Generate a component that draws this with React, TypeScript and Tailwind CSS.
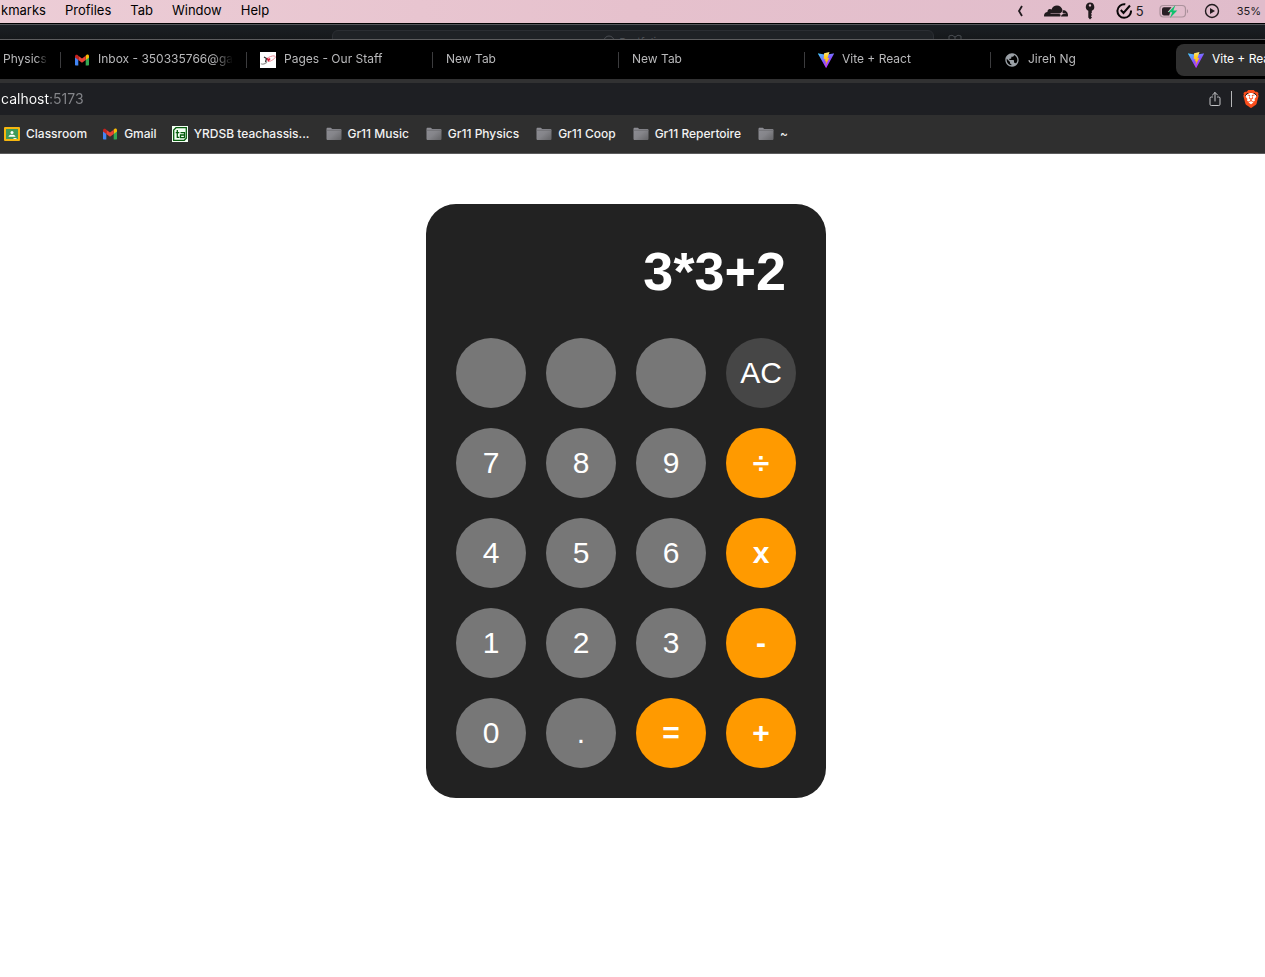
import { useState } from "react";
import type { ReactNode } from "react";
import { MdPublic } from "react-icons/md";
import { SiBrave, SiCloudflare } from "react-icons/si";
import { IoShareOutline } from "react-icons/io5";

function GmailIcon() {
  return (
    <svg viewBox="0 0 16 16" className="size-4 shrink-0" aria-hidden="true">
      <path d="M1 4.5v8c0 .6.4 1 1 1h2.3V7z" fill="#4285f4" />
      <path d="M15 4.5v8c0 .6-.4 1-1 1h-2.3V7z" fill="#34a853" />
      <path d="M11.7 3.8V8L15 5.5V4.2c0-1.4-1.5-2.1-2.6-1.2z" fill="#fbbc04" />
      <path d="M4.3 8V3.8L8 6.6l3.7-2.8V8L8 10.8z" fill="#ea4335" />
      <path d="M1 4.2v1.3L4.3 8V3.8L3.6 3C2.500 2.200 1 2.800 1 4.200z" fill="#c5221f" />
    </svg>
  );
}

function ViteIcon() {
  return (
    <svg viewBox="0 0 16 16" className="size-4 shrink-0" aria-hidden="true">
      <defs>
        <linearGradient id="vite-body" x1="0" y1="0" x2="0.6" y2="1">
          <stop offset="0" stopColor="#41d1ff" />
          <stop offset="0.6" stopColor="#8a4cff" />
          <stop offset="1" stopColor="#bd34fe" />
        </linearGradient>
        <linearGradient id="vite-bolt" x1="0" y1="0" x2="0" y2="1">
          <stop offset="0" stopColor="#ffea83" />
          <stop offset="0.3" stopColor="#ffd028" />
          <stop offset="1" stopColor="#ffa800" />
        </linearGradient>
      </defs>
      <path d="M15.900 2 8.500 15.600a.4.4 0 0 1-.8 0L.100 2a.4.4 0 0 1 .5-.6L8 2.700l7.400-1.300a.4.4 0 0 1 .5.600z" fill="url(#vite-body)" />
      <path d="M11.500.1 6.100 1.200l-.4 6.100 1.700-.3-.5 2.600 1.400-.4-1 4.600 4-7.800-1.800.3 1-3.400z" fill="url(#vite-bolt)" />
    </svg>
  );
}

function StaffIcon() {
  return (
    <svg viewBox="0 0 16 16" className="size-4 shrink-0" aria-hidden="true">
      <path fill="#fff" d="M0 0h16v16H0z" />
      <path d="M7 6.500C10 4 15 3 15.300 4.800c.2 1.500-3 3.500-6 4.800" fill="none" stroke="#ec8a97" strokeWidth="1" />
      <path d="M1 11.500c1 1.300 5 .5 6-2" fill="none" stroke="#999" strokeWidth="1.200" />
      <path d="m4 5 2.500 1.500L5.500 10" fill="none" stroke="#333" strokeWidth="1.300" />
      <path d="M6.500 6.500c1-1 1.800-.5 2 .3.600-1 2.200-.8 1.800.6L8.300 10z" fill="#d61f3c" />
    </svg>
  );
}

function ClassroomIcon() {
  return (
    <svg viewBox="0 0 16 16" className="size-4 shrink-0" aria-hidden="true">
      <rect y="1" width="16" height="14" rx="1" fill="#f6b60f" />
      <path fill="#3f9a5a" d="M2 3h12v10H2z" />
      <circle cx="8" cy="6.500" r="1.500" fill="#fff" />
      <path d="M4.500 10.800C4.500 9.300 6 8.700 8 8.700s3.500.6 3.500 2.100z" fill="#fff" />
      <path fill="#e8f3ec" d="M9.500 12h3v1h-3z" />
    </svg>
  );
}

function TeachAssistIcon() {
  return (
    <svg viewBox="0 0 16 16" className="size-4 shrink-0" aria-hidden="true">
      <path fill="#f4fff4" d="M0 0h16v16H0z" />
      <path fill="none" stroke="#075c0e" strokeWidth="1.300" d="M4 1.700h10.300v10.600l-2 2H1.700V4z" />
      <path fill="none" stroke="#075c0e" strokeWidth="1.300" d="M5.300 4v7.300h2M3.700 6.700h3.600M8.500 6.700h4v5h-4V9h4" />
    </svg>
  );
}

function FolderIcon() {
  return (
    <svg viewBox="0 0 16 16" className="size-4 shrink-0" aria-hidden="true">
      <defs>
        <linearGradient id="folder" x1="0" y1="0" x2="1" y2="1">
          <stop offset="0" stopColor="#8e8e95" />
          <stop offset="0.5" stopColor="#85858a" />
          <stop offset="1" stopColor="#646467" />
        </linearGradient>
      </defs>
      <path d="M.500 3c0-.9.500-1.300 1.300-1.300h3l1.400 1.200h8c.8 0 1.300.4 1.300 1.200v8.600c0 .8-.5 1.300-1.300 1.300H1.800c-.8 0-1.300-.5-1.300-1.300z" fill="url(#folder)" />
      <path d="M.500 4.300h15" stroke="#69696d" strokeWidth=".7" />
    </svg>
  );
}

function BatteryIcon() {
  return (
    <svg viewBox="0 0 30 16" className="h-4 w-[30px]" aria-hidden="true">
      <rect x="1" y="2.500" width="25.500" height="11.500" rx="3.500" fill="none" stroke="#ab929c" strokeWidth="1.200" />
      <path d="M28 6.200c1.400.4 1.400 3.700 0 4.100z" fill="#ab929c" />
      <path d="M5 4.200h7.500L8.700 9h2.500l-1 3.500H5a2 2 0 0 1-2-2V6.200a2 2 0 0 1 2-2z" fill="#281f24" />
      <path d="M16.500 2 9.300 9.200h3.900L11 15l7.300-7.600h-4z" fill="#0fc26d" />
    </svg>
  );
}

function MenuBar() {
  return (
    <header className="flex h-[23px] items-center justify-between bg-linear-to-r from-[#eccdd6] via-[#e6c1cd] to-[#e0bccb] pr-1 pb-0.5 pl-px text-[13px] leading-4 whitespace-nowrap text-black">
      <nav aria-label="Application menu" className="flex gap-[19px] pb-px">
        <button type="button">kmarks</button>
        <button type="button">Profiles</button>
        <button type="button">Tab</button>
        <button type="button">Window</button>
        <button type="button">Help</button>
      </nav>
      <div className="flex items-center text-[#211b1e]">
        <svg viewBox="0 0 8 12" className="mr-5 h-3 w-2" aria-hidden="true">
          <path d="M6 1 3 6l3 5" fill="none" stroke="currentColor" strokeWidth="1.800" />
        </svg>
        <SiCloudflare className="mr-4 size-6" aria-hidden="true" />
        <svg viewBox="0 0 12 18" className="mr-5 h-[18px] w-3" aria-hidden="true">
          <path d="M6 .500a4.300 4.300 0 0 0-1.700 8.200V15.500L6 17.500l2-2-1.100-1.200L8 13.100l-1.100-1.300.9-.9V8.700A4.300 4.300 0 0 0 6 .500zm0 1.700a1.200 1.200 0 1 1 0 2.400 1.200 1.200 0 0 1 0-2.400z" fill="currentColor" fillRule="evenodd" />
        </svg>
        <svg viewBox="0 0 16 16" className="mr-1 size-4" aria-hidden="true">
          <path d="M9.300 1.300A6.800 6.800 0 1 0 15 7.500M4.800 7l2.700 3 6.500-7.500" fill="none" stroke="#080607" strokeWidth="2" />
        </svg>
        <span className="mr-[15px]">5</span>
        <BatteryIcon />
        <svg viewBox="0 0 16 16" className="mr-[17px] ml-[15px] size-4" aria-hidden="true">
          <circle cx="8" cy="8" r="6.500" fill="none" stroke="currentColor" strokeWidth="1.400" />
          <path d="m6 5 5 3-5 3z" fill="currentColor" />
        </svg>
        <span className="text-[11px]">35%</span>
      </div>
    </header>
  );
}

function BackWindow() {
  return (
    <div className="flex h-4 items-start overflow-hidden border-y border-t-[#54565a] border-b-[#5c5c5e] bg-linear-to-b from-[#1b1f24] to-[#16181b] text-[11px] text-[#494c51]">
      <div className="mt-[5px] ml-[332px] flex h-6 w-[602px] items-start justify-center gap-1 rounded-t-md border border-[#2b2e33] bg-[#1f2226] pt-[3px] leading-4">
        <svg viewBox="0 0 12 12" className="mt-px size-3" aria-hidden="true">
          <circle cx="6" cy="6" r="5" fill="none" stroke="currentColor" />
        </svg>
        <span>Portfolio</span>
      </div>
      <svg viewBox="0 0 14 10" className="mt-[9px] ml-3.5 h-2.5 w-3.5 shrink-0" aria-hidden="true">
        <path d="M1 10V2q3-2 6 1 3-3 6-1v8M7 3v7" fill="none" stroke="currentColor" />
      </svg>
    </div>
  );
}

type Tab = { title: string; icon?: ReactNode };

const tabs: Tab[] = [
  { title: "Inbox - 350335766@gap", icon: <GmailIcon /> },
  { title: "Pages - Our Staff", icon: <StaffIcon /> },
  { title: "New Tab" },
  { title: "New Tab" },
  { title: "Vite + React", icon: <ViteIcon /> },
  { title: "Jireh Ng", icon: <MdPublic className="size-4 shrink-0 text-[#9aa0a6]" aria-hidden="true" /> },
];

function TabStrip() {
  return (
    <div className="flex h-[39px] items-center overflow-hidden bg-black text-[12px] leading-4 whitespace-nowrap text-[#b9b9bb]">
      <button type="button" className="w-[60px] shrink-0 overflow-hidden mask-r-from-[60%] mask-r-to-[80%] pb-px pl-[3px] text-left">
        Physics
      </button>
      {tabs.map((tab, i) => (
        <button key={i} type="button" className="flex h-4 w-[186px] shrink-0 items-center gap-2 border-l border-[#3c3c3e] px-[13px] text-left">
          {tab.icon}
          <span className="min-w-0 flex-1 overflow-hidden mask-r-from-[85%] pb-px">{tab.title}</span>
        </button>
      ))}
      <button type="button" className="flex h-8 w-[186px] shrink-0 items-center gap-2 rounded-lg bg-[#303030] px-3 text-left text-white">
        <ViteIcon />
        <span className="pb-px">Vite + React</span>
      </button>
    </div>
  );
}

function AddressBar() {
  return (
    <div className="flex h-9 items-center border-t-4 border-[#313132] bg-[#1e1f23] pr-[5px]">
      <input
        aria-label="Address"
        defaultValue="calhost:5173"
        className="min-w-0 flex-1 bg-linear-to-r from-white from-[49px] to-[#85868a] to-[49px] bg-clip-text pl-px text-[14px] leading-5 text-transparent caret-white outline-none"
      />
      <button type="button" aria-label="Share" className="text-[#c4c5c8]">
        <IoShareOutline className="size-4" />
      </button>
      <span className="mx-2 h-4 w-px bg-[#b5b6b8]" />
      <button type="button" aria-label="Brave Shields" className="ml-0.5 bg-[radial-gradient(circle,white_45%,transparent_50%)] text-[#fb4d1b]">
        <SiBrave className="size-[18px]" />
      </button>
    </div>
  );
}

type Bookmark = { title: string; icon: ReactNode };

const sites: Bookmark[] = [
  { title: "Classroom", icon: <ClassroomIcon /> },
  { title: "Gmail", icon: <GmailIcon /> },
  { title: "YRDSB teachassis...", icon: <TeachAssistIcon /> },
];

const folders: Bookmark[] = [
  { title: "Gr11 Music", icon: <FolderIcon /> },
  { title: "Gr11 Physics", icon: <FolderIcon /> },
  { title: "Gr11 Coop", icon: <FolderIcon /> },
  { title: "Gr11 Repertoire", icon: <FolderIcon /> },
  { title: "~", icon: <FolderIcon /> },
];

function BookmarkLink({ title, icon }: Bookmark) {
  return (
    <li>
      <a href="#" className="flex items-center gap-1.5">
        {icon}
        {title}
      </a>
    </li>
  );
}

function BookmarksBar() {
  return (
    <nav aria-label="Bookmarks" className="flex h-[39px] items-center gap-4 border-b border-[#5b5b5c] bg-[#2f2f2f] pl-1 text-[12px] leading-4 font-medium whitespace-nowrap text-[#f2f2f2]">
      <ul className="flex gap-[15px]">
        {sites.map((b) => (
          <BookmarkLink key={b.title} {...b} />
        ))}
      </ul>
      <ul className="flex gap-[17px]">
        {folders.map((b) => (
          <BookmarkLink key={b.title} {...b} />
        ))}
      </ul>
    </nav>
  );
}

/** Evaluates a flat expression of numbers and + - * /, with the usual precedence. */
function evaluate(expression: string): string {
  const tokens = expression.match(/\d*\.?\d+|[-+*/]/g) ?? [];
  const terms: number[] = [];
  let op = "+";
  for (const token of tokens) {
    if (/^[-+*/]$/.test(token)) {
      op = token;
      continue;
    }
    const n = Number(token);
    if (op === "+") terms.push(n);
    if (op === "-") terms.push(-n);
    if (op === "*") terms.push((terms.pop() ?? 0) * n);
    if (op === "/") terms.push((terms.pop() ?? 0) / n);
  }
  return String(terms.reduce((a, b) => a + b, 0));
}

type Key = { label: string; kind: "digit" | "clear" | "operator"; value?: string };

const keys: Key[] = [
  { label: "", kind: "digit" },
  { label: "", kind: "digit" },
  { label: "", kind: "digit" },
  { label: "AC", kind: "clear" },
  { label: "7", kind: "digit" },
  { label: "8", kind: "digit" },
  { label: "9", kind: "digit" },
  { label: "÷", kind: "operator", value: "/" },
  { label: "4", kind: "digit" },
  { label: "5", kind: "digit" },
  { label: "6", kind: "digit" },
  { label: "x", kind: "operator", value: "*" },
  { label: "1", kind: "digit" },
  { label: "2", kind: "digit" },
  { label: "3", kind: "digit" },
  { label: "-", kind: "operator" },
  { label: "0", kind: "digit" },
  { label: ".", kind: "digit" },
  { label: "=", kind: "operator" },
  { label: "+", kind: "operator" },
];

const keyStyles = {
  digit: "bg-[#777777]",
  clear: "bg-[#464646]",
  operator: "bg-[#ff9a00] font-bold",
};

function Calculator() {
  const [expression, setExpression] = useState("3*3+2");

  const press = (key: Key) => {
    if (key.kind === "clear") setExpression("");
    else if (key.label === "=") setExpression(evaluate(expression));
    else setExpression(expression + (key.value ?? key.label));
  };

  return (
    <section aria-label="Calculator" className="rounded-[30px] bg-[#222222] p-[30px] font-['Liberation_Sans',Arial,sans-serif] text-white">
      <output className="mb-5 block h-[84px] px-2.5 pt-1.5 text-right text-[54px] leading-[62px] font-bold">{expression}</output>
      <div className="grid grid-cols-4 gap-5">
        {keys.map((key, i) => (
          <button
            key={i}
            type="button"
            aria-label={key.label || "Blank key"}
            onClick={() => press(key)}
            className={`size-[70px] rounded-full pb-px text-[30px] leading-9 ${keyStyles[key.kind]}`}
          >
            {key.label}
          </button>
        ))}
      </div>
    </section>
  );
}

export default function App() {
  return (
    <div className="min-h-screen overflow-hidden bg-white font-[Inter,sans-serif]">
      <MenuBar />
      <div className="border-t border-black">
        <BackWindow />
        <TabStrip />
        <AddressBar />
        <BookmarksBar />
      </div>
      <main className="flex justify-center py-[50px] pr-[13px]">
        <Calculator />
      </main>
    </div>
  );
}
